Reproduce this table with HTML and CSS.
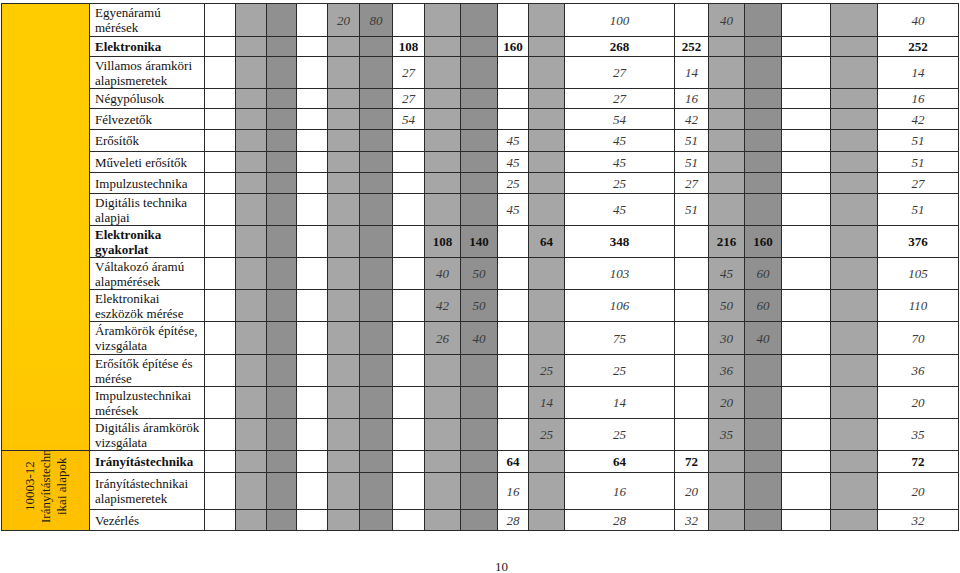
FILE: index.html
```html
<!DOCTYPE html>
<html lang="hu">
<head>
<meta charset="utf-8">
<title>Óraszámok</title>
<link rel="stylesheet" href="styles.css">
</head>
<body>
<table class="grid">
<colgroup>
<col class="w88"><col class="w115"><col class="w31"><col class="w31 l"><col class="w30 d"><col class="w31"><col class="w32 l"><col class="w33 d"><col class="w32"><col class="w36 l"><col class="w37 d"><col class="w31"><col class="w36 l"><col class="w110"><col class="w34"><col class="w36 l"><col class="w37 d"><col class="w49"><col class="w47 l"><col class="w81">
</colgroup>
<tbody>
<tr class="h33 it"><td class="y1" rowspan="16"></td><td class="lab">Egyenáramú<br>mérések</td><td></td><td></td><td></td><td></td><td>20</td><td>80</td><td></td><td></td><td></td><td></td><td></td><td>100</td><td></td><td>40</td><td></td><td></td><td></td><td>40</td></tr>
<tr class="h20 b"><td class="lab">Elektronika</td><td></td><td></td><td></td><td></td><td></td><td></td><td>108</td><td></td><td></td><td>160</td><td></td><td>268</td><td>252</td><td></td><td></td><td></td><td></td><td>252</td></tr>
<tr class="h32 it"><td class="lab">Villamos áramköri<br>alapismeretek</td><td></td><td></td><td></td><td></td><td></td><td></td><td>27</td><td></td><td></td><td></td><td></td><td>27</td><td>14</td><td></td><td></td><td></td><td></td><td>14</td></tr>
<tr class="h20 it"><td class="lab">Négypólusok</td><td></td><td></td><td></td><td></td><td></td><td></td><td>27</td><td></td><td></td><td></td><td></td><td>27</td><td>16</td><td></td><td></td><td></td><td></td><td>16</td></tr>
<tr class="h21 it"><td class="lab">Félvezetők</td><td></td><td></td><td></td><td></td><td></td><td></td><td>54</td><td></td><td></td><td></td><td></td><td>54</td><td>42</td><td></td><td></td><td></td><td></td><td>42</td></tr>
<tr class="h22 it"><td class="lab">Erősítők</td><td></td><td></td><td></td><td></td><td></td><td></td><td></td><td></td><td></td><td>45</td><td></td><td>45</td><td>51</td><td></td><td></td><td></td><td></td><td>51</td></tr>
<tr class="h21 it"><td class="lab">Műveleti erősítők</td><td></td><td></td><td></td><td></td><td></td><td></td><td></td><td></td><td></td><td>45</td><td></td><td>45</td><td>51</td><td></td><td></td><td></td><td></td><td>51</td></tr>
<tr class="h21 it"><td class="lab">Impulzustechnika</td><td></td><td></td><td></td><td></td><td></td><td></td><td></td><td></td><td></td><td>25</td><td></td><td>25</td><td>27</td><td></td><td></td><td></td><td></td><td>27</td></tr>
<tr class="h32 it"><td class="lab">Digitális technika<br>alapjai</td><td></td><td></td><td></td><td></td><td></td><td></td><td></td><td></td><td></td><td>45</td><td></td><td>45</td><td>51</td><td></td><td></td><td></td><td></td><td>51</td></tr>
<tr class="h32 b"><td class="lab">Elektronika<br>gyakorlat</td><td></td><td></td><td></td><td></td><td></td><td></td><td></td><td>108</td><td>140</td><td></td><td>64</td><td>348</td><td></td><td>216</td><td>160</td><td></td><td></td><td>376</td></tr>
<tr class="h32 it"><td class="lab">Váltakozó áramú<br>alapmérések</td><td></td><td></td><td></td><td></td><td></td><td></td><td></td><td>40</td><td>50</td><td></td><td></td><td>103</td><td></td><td>45</td><td>60</td><td></td><td></td><td>105</td></tr>
<tr class="h32 it"><td class="lab">Elektronikai<br>eszközök mérése</td><td></td><td></td><td></td><td></td><td></td><td></td><td></td><td>42</td><td>50</td><td></td><td></td><td>106</td><td></td><td>50</td><td>60</td><td></td><td></td><td>110</td></tr>
<tr class="h33 it"><td class="lab">Áramkörök építése,<br>vizsgálata</td><td></td><td></td><td></td><td></td><td></td><td></td><td></td><td>26</td><td>40</td><td></td><td></td><td>75</td><td></td><td>30</td><td>40</td><td></td><td></td><td>70</td></tr>
<tr class="h32 it"><td class="lab">Erősítők építése és<br>mérése</td><td></td><td></td><td></td><td></td><td></td><td></td><td></td><td></td><td></td><td></td><td>25</td><td>25</td><td></td><td>36</td><td></td><td></td><td></td><td>36</td></tr>
<tr class="h32 it"><td class="lab">Impulzustechnikai<br>mérések</td><td></td><td></td><td></td><td></td><td></td><td></td><td></td><td></td><td></td><td></td><td>14</td><td>14</td><td></td><td>20</td><td></td><td></td><td></td><td>20</td></tr>
<tr class="h32 it"><td class="lab">Digitális áramkörök<br>vizsgálata</td><td></td><td></td><td></td><td></td><td></td><td></td><td></td><td></td><td></td><td></td><td>25</td><td>25</td><td></td><td>35</td><td></td><td></td><td></td><td>35</td></tr>
<tr class="h21 b"><td class="y2" rowspan="3"><div class="vert">10003-12<br>Irányítástechn<br>ikai alapok</div></td><td class="lab">Irányítástechnika</td><td></td><td></td><td></td><td></td><td></td><td></td><td></td><td></td><td></td><td>64</td><td></td><td>64</td><td>72</td><td></td><td></td><td></td><td></td><td>72</td></tr>
<tr class="h36 it"><td class="lab">Irányítástechnikai<br>alapismeretek</td><td></td><td></td><td></td><td></td><td></td><td></td><td></td><td></td><td></td><td>16</td><td></td><td>16</td><td>20</td><td></td><td></td><td></td><td></td><td>20</td></tr>
<tr class="h20 it"><td class="lab">Vezérlés</td><td></td><td></td><td></td><td></td><td></td><td></td><td></td><td></td><td></td><td>28</td><td></td><td>28</td><td>32</td><td></td><td></td><td></td><td></td><td>32</td></tr>
</tbody>
</table>
<div class="pagenum">10</div>
</body>
</html>
```

FILE: styles.css
```css
html, body {
  margin: 0;
  background: #ffffff;
}
body {
  padding: 3px 0 0 1px;
  font-family: "Liberation Serif", "Times New Roman", serif;
  font-size: 13px;
  color: #1a1a1a;
}
.grid {
  border-collapse: collapse;
  table-layout: fixed;
  width: 957px;
}
.grid td {
  border: 1px solid #2a2a2a;
  padding: 0;
  text-align: center;
  vertical-align: middle;
  line-height: 15px;
  white-space: nowrap;
  overflow: hidden;
}
.l { background: #a6a6a6; }
.d { background: #909090; }
.w88 { width: 88px; }
.w115 { width: 115px; }
.w30 { width: 30px; }
.w31 { width: 31px; }
.w32 { width: 32px; }
.w33 { width: 33px; }
.w34 { width: 34px; }
.w36 { width: 36px; }
.w37 { width: 37px; }
.w47 { width: 47px; }
.w49 { width: 49px; }
.w81 { width: 81px; }
.w110 { width: 110px; }
.h20 { height: 20px; }
.h21 { height: 21px; }
.h22 { height: 22px; }
.h32 { height: 32px; }
.h33 { height: 33px; }
.h36 { height: 36px; }
.it td { font-style: italic; color: #3a3a3a; }
.b td { font-weight: bold; color: #111111; }
.grid td.lab {
  text-align: left;
  padding: 0 3px 0 5px;
  font-style: normal;
  color: #111111;
}
.it td.lab { font-weight: normal; }
.grid td.y1 {
  background: linear-gradient(#ffcc00 0%, #ffcc00 70%, #ffc400 100%);
}
.grid td.y2 {
  background: #ffc000;
  font-style: normal;
  font-weight: normal;
  color: #1a1a1a;
}
.vert {
  display: inline-block;
  writing-mode: vertical-rl;
  transform: rotate(180deg) translateY(3px);
  height: 76px;
  line-height: 16px;
  text-align: center;
  white-space: nowrap;
}
.pagenum {
  margin-top: 29px;
  padding-left: 494px;
  line-height: 14px;
  font-size: 13px;
  color: #1a1a1a;
}
```
